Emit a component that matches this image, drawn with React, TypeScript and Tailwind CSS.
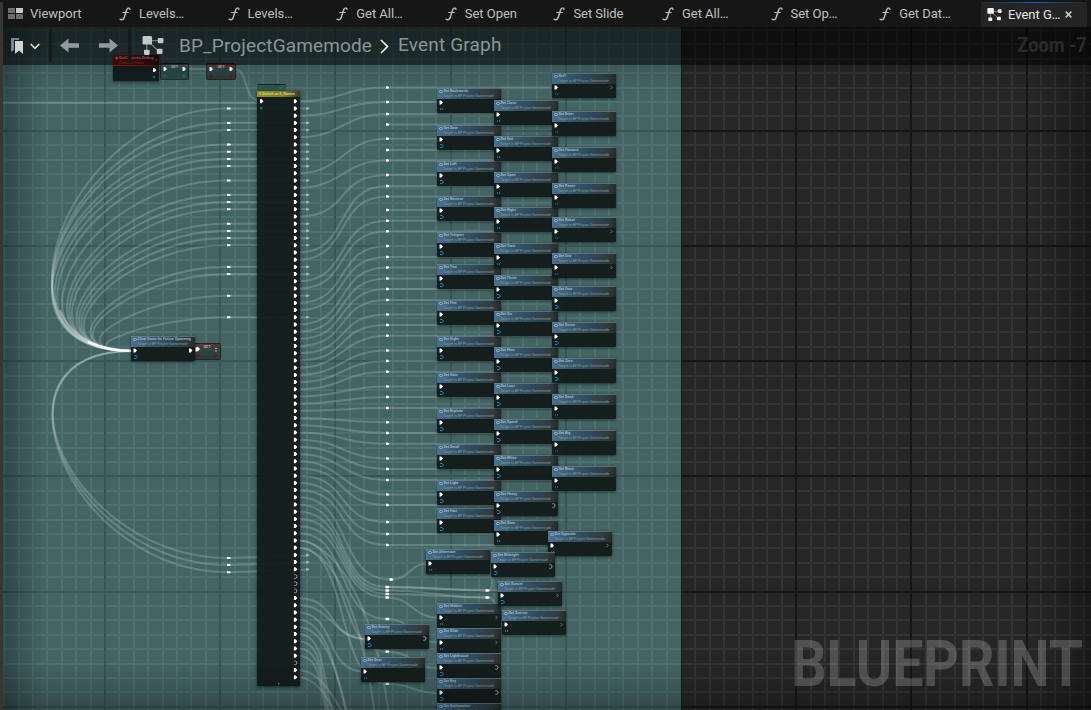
import React from "react";

type PinKind = "dots" | "arrow";
type NodeData = { x: number; y: number; name: string; pin: PinKind; out?: "hollow" | "solid" | "chevron" };

const column = (x: number, rows: [number, string, PinKind, NodeData["out"]?][]): NodeData[] =>
  rows.map(([y, name, pin, out]) => ({ x, y, name, pin, out }));

const NODES: NodeData[] = [
  { x: 131, y: 336, name: "Clear Items for Future Spawning", pin: "arrow", out: "solid" },
  ...column(437, [
    [88, "Set Backwards", "dots"], [125, "Set Door", "arrow"], [161, "Set Left", "arrow"],
    [196, "Set Reverse", "arrow"], [232, "Set Teleport", "arrow"], [264, "Set Two", "arrow"],
    [300, "Set Five", "arrow"], [336, "Set Eight", "arrow"], [372, "Set Gain", "arrow"],
    [408, "Set Explode", "arrow"], [444, "Set Small", "arrow"], [480, "Set Light", "arrow"],
    [508, "Set Fast", "arrow"],
  ]),
  ...column(494, [
    [100, "Set Close", "dots"], [136, "Set Exit", "dots"], [172, "Set Open", "dots"],
    [207, "Set Right", "dots"], [243, "Set Train", "dots"], [275, "Set Three", "arrow"],
    [311, "Set Six", "arrow"], [347, "Set Nine", "arrow"], [383, "Set Lose", "arrow"],
    [419, "Set Speed", "arrow"], [455, "Set White", "arrow"], [491, "Set Heavy", "arrow", "hollow"],
    [520, "Set Slow", "dots"],
  ]),
  ...column(552, [
    [73, "Set?", "dots", "chevron"], [111, "Set Enter", "dots"], [147, "Set Forward", "dots"],
    [183, "Set Power", "dots"], [217, "Set Robot", "dots", "chevron"], [253, "Set One", "dots", "chevron"],
    [286, "Set Four", "arrow"], [322, "Set Seven", "arrow"], [358, "Set Zero", "arrow"],
    [394, "Set Dead", "dots"], [430, "Set Big", "dots"], [466, "Set Black", "dots"],
  ]),
  { x: 548, y: 531, name: "Set Opposite", pin: "dots", out: "chevron" },
  { x: 426, y: 549, name: "Set Afternoon", pin: "dots" },
  { x: 491, y: 552, name: "Set Midnight", pin: "arrow", out: "hollow" },
  ...column(437, [
    [603, "Set Hidden", "dots", "chevron"], [628, "Set Slide", "dots", "chevron"],
    [653, "Set Lighthouse", "arrow", "hollow"], [678, "Set Key", "arrow", "hollow"],
    [703, "Set Exclamation", "arrow"],
  ]),
  { x: 498, y: 581, name: "Set Sunset", pin: "arrow", out: "chevron" },
  { x: 502, y: 610, name: "Set Sunrise", pin: "dots", out: "chevron" },
  { x: 365, y: 624, name: "Set Gravity", pin: "arrow", out: "hollow" },
  { x: 361, y: 657, name: "Set Gear", pin: "dots" },
];

const pinY = (i: number) => 101.3 + i * 7.2;
const HOLLOW = [66, 67, 68, 78];
const LOOP_TOP = [1, 3, 4, 6, 7, 8, 9, 11, 13, 14, 15, 17, 18, 19, 20, 23, 24, 27, 30];
const LOOP_BOTTOM = [63, 64, 65];

/* [switch pin index or -1, reroute y, end x] */
const KNOTS: [number, number, number][] = [
  [0, 87.5, 553], [2, 102, 438], [5, 114, 495], [-1, 124.5, 553], [10, 138.7, 438], [-1, 150, 495],
  [12, 160.5, 553], [16, 175, 438], [21, 186, 495], [22, 196.5, 553], [-1, 210, 438], [25, 220.7, 495],
  [26, 231.3, 553], [28, 246, 438], [29, 257, 495], [31, 267.5, 553], [32, 278.5, 438], [33, 289, 495],
  [34, 300, 553], [35, 314.5, 438], [36, 325, 495], [37, 335.8, 553], [38, 350.5, 438], [39, 361, 495],
  [40, 371.8, 553], [41, 386.5, 438], [42, 397, 495], [43, 408, 553], [44, 422.3, 438], [45, 433, 495],
  [46, 443.8, 553], [47, 458.5, 438], [48, 469, 495], [49, 480, 553], [50, 494.5, 438], [51, 505, 495],
  [52, 522, 438], [53, 534, 495], [54, 545, 549],
];

const LOWER: [number, number, number][] = [
  [55, 391, 579.5], [56, 387, 587], [57, 387, 590.5], [58, 387, 594], [59, 387, 597.5], [60, 387, 619],
  [61, 387, 651.5], [62, 387, 683.8], [69, 367, 639], [70, 367, 639], [71, 363, 671.5],
];

const FALLING: [number, number][] = [
  [61, 392], [62, 378], [72, 352], [73, 354], [74, 338], [75, 336], [76, 335], [77, 334], [79, 358], [80, 352],
];

const curve = (x1: number, y1: number, x2: number, y2: number) => {
  const d = (x2 - x1) * (Math.abs(y2 - y1) > 35 ? 0.6 : 0.5);
  return `M${x1} ${y1}C${x1 + d} ${y1} ${x2 - d} ${y2} ${x2} ${y2}`;
};

const loop = (y: number) => {
  const dy = Math.abs(351 - y);
  const d = Math.min(157, 57 + 0.5 * dy);
  return `M309 ${y}H226C${226 - d} ${y} ${133 - d} 351 133 351`;
};

const WIRES: string[] = [
  "M3 103H260",
  curve(184, 69, 208, 69),
  "M233 69C250 69 242 100 260 101",
  ...LOOP_TOP.map((i) => loop(pinY(i))),
  "M309 555.5L228 558C71 558 -24 351 133 351",
  "M309 562.5L228 565C71 565 -24 351 133 351",
  "M309 569.5L228 572.3C71 572.3 -24 351 133 351",
  ...KNOTS.map(([i, y, end]) => (i < 0 ? "" : curve(298, pinY(i), 387, y)) + `M387 ${y}H${end}`),
  ...LOWER.map(([i, x, y]) => curve(298, pinY(i), x, y)),
  ...FALLING.map(([i, x]) => `M298 ${pinY(i)}C326 ${pinY(i)} ${x - 16} ${pinY(i) + 45} ${x} 740`),
  curve(391, 579.5, 428, 563.5),
  curve(387, 587, 487, 590.5),
  curve(387, 590.5, 487, 597.5),
  curve(387, 594, 487, 597.5),
  curve(387, 587, 500, 590.5),
  "M487 590.5C499 589 485 568 494 567",
  "M487 597.5C500 597 492 624 505 625",
  curve(387, 597.5, 438, 617.5),
  curve(387, 619, 438, 642.5),
  curve(387, 651.5, 438, 668),
  curve(387, 683.8, 438, 693),
];

function range(start: number, step: number, max: number) {
  const out: number[] = [];
  for (let k = 0; start + step * k < max; k++) out.push(k);
  return out;
}

function Grid({ x0, x1, minor, major }: { x0: number; x1: number; minor: string; major: string }) {
  const cols = range(4.2, 14.4, 1100).map((k) => ({ p: 4.2 + 14.4 * k, m: k % 8 === 7 }));
  const rows = range(15.5, 14.4, 720).map((k) => ({ p: 15.5 + 14.4 * k, m: k % 8 === 0 }));
  const vertical = cols.filter((c) => c.p >= x0 && c.p <= x1);
  return (
    <g shapeRendering="crispEdges">
      {vertical.filter((c) => !c.m).map((c) => <rect key={c.p} x={Math.round(c.p) - 1} y={0} width={2} height={710} fill={minor} />)}
      {rows.filter((r) => !r.m).map((r) => <rect key={r.p} x={x0} y={Math.round(r.p) - 1} width={x1 - x0} height={2} fill={minor} />)}
      {vertical.filter((c) => c.m).map((c) => <rect key={c.p} x={Math.round(c.p) - 1} y={0} width={2} height={710} fill={major} />)}
      {rows.filter((r) => r.m).map((r) => <rect key={r.p} x={x0} y={Math.round(r.p) - 1} width={x1 - x0} height={2} fill={major} />)}
    </g>
  );
}

function Exec({ x, y, fill = "#fff" }: { x: number; y: number; fill?: string }) {
  return <path d={`M${x - 1.5} ${y - 2}h1.6l1.9 2l-1.9 2h-1.6z`} fill={fill} />;
}

function HollowPin({ x, y }: { x: number; y: number }) {
  return <path d={`M${x - 1.2} ${y - 1.8}h1.200a1.500 1.800 0 0 1 0 3.600h-1.200`} fill="none" stroke="#b9bfbf" strokeWidth={0.8} />;
}

function GraphNode({ node }: { node: NodeData }) {
  const bright = node.x !== 552 || node.pin === "arrow";
  return (
    <div
      className="absolute h-[25px] w-16 rounded-[1px] bg-[#121a19]/95 shadow-[0_1px_3px_rgba(0,0,0,0.55)]"
      style={{ left: node.x, top: node.y }}
    >
      <div className="h-[11px] border-t border-[#7d8d90]/60 bg-[linear-gradient(100deg,#4a7392_0%,#365870_30%,#2f4756_62%,#303a3d_88%,#202928_100%)] pl-[2px]">
        <div className="flex h-[5px] items-center gap-[1px] whitespace-nowrap font-['Roboto'] text-[3.7px] font-bold leading-[5px] text-[#b9cbd6]/80">
          <span className="h-[3.5px] w-[3.5px] rounded-full border border-[#a9c6da]/80" />
          <span>{node.name}</span>
        </div>
        <div className="h-[5px] whitespace-nowrap pl-[4px] font-['Roboto'] text-[3.6px] leading-[5px] text-[#a3ad98]/80">
          Target is BP Project Gamemode
        </div>
      </div>
      <svg className="absolute inset-0" width="64" height="25">
        <Exec x={4} y={14.5} />
        {node.pin === "arrow" ? (
          <path d="M3 19.5h2l1.7 1.5l-1.7 1.5h-2" fill="none" stroke="#1187c4" strokeWidth={1} />
        ) : (
          <path d="M3 20h1.2v2h-1.2zM5 20h1.2v2h-1.2z" fill={bright ? "#126896" : "#0f4e72"} />
        )}
        {node.out === "hollow" && <HollowPin x={59.5} y={14.5} />}
        {node.out === "solid" && <Exec x={59.5} y={14.5} />}
        {node.out === "chevron" && <path d="M58.5 12.8l1.7 1.7l-1.7 1.7" fill="none" stroke="#88908f" strokeWidth={0.8} />}
      </svg>
    </div>
  );
}

function SetNode({ x, y, w, h, red, dot, idle }: { x: number; y: number; w: number; h: number; red?: boolean; dot: string; idle?: boolean }) {
  return (
    <div
      className={
        "absolute rounded-[2px] border border-[#152422]/80 font-['Roboto'] " +
        (red ? "bg-[linear-gradient(#6a3032,#2f4644_35%,#2a3b39)]" : "bg-[linear-gradient(#45625f,#2a4846_35%,#2b4a47)]")
      }
      style={{ left: x, top: y, width: w, height: h }}
    >
      <div className="text-center text-[4px] font-bold leading-[5px] text-[#c4c9c8]/80">SET</div>
      <svg className="absolute inset-0" width={w} height={h}>
        <Exec x={4} y={5} />
        {idle ? <path d={`M${w - 7} 4h2v1h-2zM${w - 7} 6.500h2v1h-2z`} fill="#aab3b1" /> : <Exec x={w - 6} y={5} />}
        <circle cx={3.8} cy={11.8} r={1.5} fill={dot} />
        <circle cx={w - 6} cy={11.8} r={1.5} fill={dot} />
      </svg>
    </div>
  );
}

function EventGraph() {
  return (
    <div className="absolute inset-0 overflow-hidden bg-[#262626]">
      <svg className="absolute inset-0" width="1091" height="710">
        <Grid x0={682} x1={1091} minor="#343434" major="#151515" />
        <rect x={0} y={0} width={681} height={710} fill="#446464" />
        <Grid x0={3} x1={681} minor="#4e7070" major="#365657" />
        <rect x={681} y={0} width={1} height={710} fill="#141a1a" />
        <g fill="none" stroke="#d5e2df" strokeOpacity={0.22} strokeWidth={2.1}>
          {WIRES.map((d, i) => <path key={i} d={d} />)}
        </g>
        <path d="M60 310C70 336 98 351 133 351" fill="none" stroke="#fff" strokeOpacity={0.35} strokeWidth={2} />
        <path d="M88 342Q108 351 133 351" fill="none" stroke="#fff" strokeOpacity={0.7} strokeWidth={2.6} />
        <g fill="#fff">
          {[...LOOP_TOP.map(pinY), 558, 565, 572.3].map((y) => (
            <path key={y} d={`M227 ${y - 1}h3l1 1l-1 1h-3z`} />
          ))}
          {KNOTS.map(([, y]) => <path key={y} d={`M386 ${y - 1.2}h2.2l1 1.2l-1 1.2h-2.2z`} />)}
          {LOWER.slice(0, 8).map(([i, x, y]) => <path key={i} d={`M${x - 1.5} ${y - 1.2}h3l1 1.2l-1 1.2h-3z`} />)}
          <path d="M485.500 589.200h3l1.500 1.300l-1.500 1.300h-3zM485.500 596.200h3l1.500 1.300l-1.500 1.300h-3z" />
        </g>
        <g fill="#c8d3d1" fillOpacity={0.6}>
          {[...LOOP_TOP, ...LOOP_BOTTOM].map((i) => (
            <path key={i} d={`M306 ${pinY(i) - 1.3}h1l3 1.300l-3 1.300h-1z`} />
          ))}
        </g>
      </svg>

      <div className="absolute left-[113px] top-[55px] h-[26px] w-[46px] bg-[#101918]/95 font-['Roboto'] text-[4px] leading-[5px] shadow-[0_1px_3px_rgba(0,0,0,0.5)]">
        <div className="h-[11px] whitespace-nowrap bg-[linear-gradient(100deg,#a01414,#7c1515_60%,#321917)] pl-[2px] text-[#ecc8c3]">
          <div className="font-bold">◆ SetCustoms Debug</div>
          <div className="pl-[4px] text-[#c77a58]">Custom Event</div>
        </div>
        <svg className="absolute inset-0" width="46" height="26">
          <Exec x={41.5} y={15} />
          <circle cx={41} cy={22} r={1.3} fill="#087c6c" />
          <rect x={42} y={4} width={2} height={2} fill="#e33" />
        </svg>
      </div>
      <SetNode x={160} y={63} w={29} h={17} dot="#087c6c" />
      <SetNode x={206} y={63} w={30} h={17} red dot="#8a0c0c" />

      <div className="absolute left-[257px] top-[84px] h-[8px] w-[29px] rounded-t-[2px] border-t border-[#152422] bg-[#2f5551]">
        <div className="ml-[22px] mt-[2px] h-[2px] w-[3px] bg-[#078574]" />
      </div>
      <div className="absolute left-[257px] top-[91px] h-[595px] w-[43px] bg-[#101817]/92 shadow-[0_1px_3px_rgba(0,0,0,0.6)]">
        <div className="h-[6px] whitespace-nowrap bg-[linear-gradient(90deg,#94901b,#7d7a1f_65%,#3a3f24)] pl-[2px] font-['Roboto'] text-[3.7px] font-bold leading-[6px] text-[#e6e4b5]/80">
          C Switch on E_Names
        </div>
        <svg className="absolute inset-0" width="43" height="595">
          <Exec x={4.5} y={10.3} />
          <rect x={3} y={16} width={2.4} height={2.4} fill="#087c6c" />
          {Array.from({ length: 81 }, (_, i) =>
            HOLLOW.includes(i) ? (
              <HollowPin key={i} x={38.4} y={pinY(i) - 91} />
            ) : (
              <Exec key={i} x={38.4} y={pinY(i) - 91} />
            ),
          )}
          <rect x={21} y={592} width={1.5} height={1.5} fill="#777" />
        </svg>
      </div>

      <SetNode x={193} y={343} w={28} h={17} red idle dot="#8a0c0c" />
      {NODES.map((n) => <GraphNode key={n.name} node={n} />)}
      <svg className="absolute left-[194px] top-[346px]" width="6" height="8">
        <Exec x={3} y={3.500} />
      </svg>

      <div className="absolute inset-0 bg-[linear-gradient(90deg,rgba(0,0,0,0.32)_0,transparent_44px,transparent_1030px,rgba(0,0,0,0.32)_100%)]" />
      <div className="absolute inset-x-0 bottom-0 h-[50px] bg-[linear-gradient(transparent,rgba(0,0,0,0.26))]" />
      <div className="absolute inset-x-0 top-[27px] h-[70px] bg-[linear-gradient(rgba(0,0,0,0.22),transparent)]" />
      <div className="absolute bottom-[14px] right-[8px] origin-right scale-x-[0.858] font-['Roboto'] text-[64.5px] font-bold leading-[64px] text-white/20">
        BLUEPRINT
      </div>
    </div>
  );
}

function FunctionIcon() {
  return (
    <svg width="12" height="14" viewBox="0 0 12 14" fill="none" stroke="#b9b9b9" strokeLinecap="round">
      <path d="M11 2.300C10.700 .7 8.400 .6 7.700 2.800L5.200 10.500C4.500 12.800 2.500 13.300 1.100 12.200" strokeWidth="1.5" />
      <path d="M3.700 5.500H9.300" strokeWidth="1.2" />
    </svg>
  );
}

function GraphIcon({ width, height, color }: { width: number; height: number; color: string }) {
  return (
    <svg width={width} height={height} viewBox="0 0 22 20" fill={color}>
      <path d="M5 5H18M6 6L17 16M4.500 6V16" stroke={color} strokeOpacity={0.65} strokeWidth="1.1" />
      <rect x="0" y="0" width="10" height="9" rx="1.500" />
      <rect x="16" y="2" width="6" height="5.500" rx="1.200" />
      <rect x="1.500" y="14.500" width="6" height="5.500" rx="1.200" />
      <rect x="15" y="13.500" width="6" height="5.500" rx="1.200" />
    </svg>
  );
}

const FUNCTION_TABS = ["Levels…", "Levels…", "Get All…", "Set Open", "Set Slide", "Get All…", "Set Op…", "Get Dat…"];

function TabBar() {
  return (
    <div className="relative flex h-[27px] bg-[#161616] text-[13px] text-[#c0c0c0]">
      <div className="flex w-[111px] shrink-0 items-center pl-2">
        <svg width="15" height="11" viewBox="0 0 15 11">
          <path d="M0 0h7v5H0zM0 6h7v5H0zM8 6h7v5H8z" fill="#6d6d6d" />
          <path d="M8 0h7v5H8z" fill="#c8c8c8" />
        </svg>
        <span className="ml-[7px] tracking-[-0.03px]">Viewport</span>
      </div>
      {FUNCTION_TABS.map((label, i) => (
        <div key={i} className="flex w-[108.600px] shrink-0 items-center pl-[8px]">
          <FunctionIcon />
          <span className="ml-2 whitespace-nowrap tracking-[-0.03px]">{label}</span>
        </div>
      ))}
      <div className="ml-[1.200px] mt-[2px] flex w-[106px] shrink-0 flex-col rounded-t-[4px] bg-[#242424]">
        <div className="h-px shrink-0 bg-[linear-gradient(90deg,#242424,#0a66cf_50%,#242424)]" />
        <div className="flex h-[23px] items-center pl-[6px] text-[#e8e8e8]">
          <GraphIcon width={15} height={13} color="#f2f2f2" />
          <span className="ml-[6px] w-[53px] whitespace-nowrap">Event G…</span>
          <svg className="ml-1" width="7" height="7" viewBox="0 0 7 7" stroke="#c4c4c4" strokeWidth="1.7">
            <path d="M.7 .7L6.300 6.300M6.300 .7L.7 6.300" />
          </svg>
        </div>
      </div>
    </div>
  );
}

function Arrow({ flip }: { flip?: boolean }) {
  return (
    <svg className={flip ? "-scale-x-100" : ""} width="19" height="15" viewBox="0 0 19 15" fill="#929b9b">
      <path d="M0 7.500L8.500 .5V5.300H19V9.700H8.500V14.500Z" />
    </svg>
  );
}

function Toolbar() {
  return (
    <div className="relative flex h-[38px] items-center bg-black/52 text-[#8b9696]">
      <div className="flex w-[46px] items-center pl-[11px]">
        <svg width="12" height="16" viewBox="0 0 12 16">
          <path d="M0 0H8V2H3V12L0 14Z" fill="#7b8686" />
          <path d="M4 3H12V16L8 12.500L4 16Z" fill="#d0d3d3" />
        </svg>
        <svg className="ml-[7px]" width="10" height="7" viewBox="0 0 10 7" fill="none" stroke="#dcdede" strokeWidth="1.6">
          <path d="M.7 1L5 5.300L9.300 1" />
        </svg>
      </div>
      <div className="ml-[3px] h-[34px] w-[3px] bg-[#151a1a]" />
      <div className="ml-[8px] flex items-center gap-[20px] pb-[2px]">
        <Arrow />
        <Arrow flip />
      </div>
      <div className="ml-[10px] h-[34px] w-[3px] bg-[#151a1a]" />
      <div className="ml-[11px] flex items-center pb-px">
        <GraphIcon width={22} height={19} color="#c3c8c8" />
      </div>
      <span className="ml-[15px] w-[193px] whitespace-nowrap text-[19px] tracking-[0.14px]">BP_ProjectGamemode</span>
      <svg className="ml-[8px]" width="9" height="15" viewBox="0 0 9 15" fill="none" stroke="#f2f4f4" strokeWidth="1.7">
        <path d="M1 1L7.500 7.500L1 14" />
      </svg>
      <span className="ml-[9px] whitespace-nowrap pb-[2px] text-[19px] tracking-[0.18px]">Event Graph</span>
      <span className="ml-auto origin-right scale-x-[0.91] whitespace-nowrap pb-[2px] pr-[5px] text-[20px] font-bold text-[#2b2b2b]">Zoom -7</span>
    </div>
  );
}

export default function App() {
  return (
    <div className="relative h-[710px] w-[1091px] overflow-hidden bg-[#161616] font-['Roboto',sans-serif]">
      <EventGraph />
      <TabBar />
      <Toolbar />
      <div className="absolute bottom-0 left-0 top-[2px] w-[3px] bg-[#383535]" />
    </div>
  );
}
